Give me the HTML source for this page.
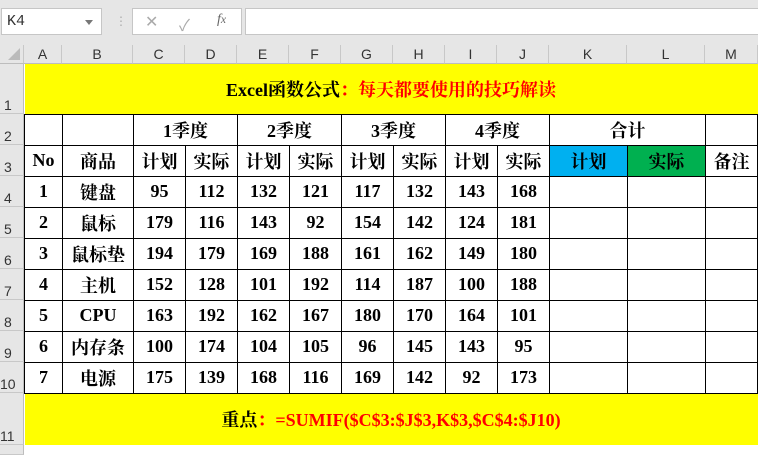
<!DOCTYPE html>
<html><head><meta charset="utf-8"><style>
*{margin:0;padding:0;box-sizing:border-box}
body{width:758px;height:450px;overflow:hidden;background:#fff;position:relative;font-family:"Liberation Sans","Noto Sans CJK SC",sans-serif}
.top{position:absolute;left:0;top:0;width:758px;height:45px;background:#e6e6e6}
.nb{position:absolute;left:1px;top:8px;width:101px;height:27px;background:#fff;border:1px solid #c6c6c6;font-family:"Liberation Mono",monospace;font-size:15px;padding:4px 5px;color:#333}
.nb:after{content:"";position:absolute;right:8px;top:11px;border:4px solid transparent;border-top:5px solid #777}
.fx{position:absolute;left:132px;top:8px;width:110px;height:27px;background:#fff;border:1px solid #c6c6c6;color:#aaa;font-size:16px}
.fb{position:absolute;left:245px;top:8px;width:513px;height:27px;background:#fff;border:1px solid #c6c6c6;border-right:none}
.ch{position:absolute;top:45px;height:19px;background:#e6e6e6;border-right:1px solid #c8c8c8;border-bottom:1px solid #bdbdbd;font-size:14px;color:#333;text-align:center;line-height:19px}
.rh{position:absolute;left:0;width:24px;background:#e6e6e6;border-bottom:1px solid #c8c8c8;border-right:1px solid #bdbdbd;font-size:14px;color:#333;padding-left:4px;display:flex;align-items:flex-end;padding-bottom:0}
table{position:absolute;left:24px;top:64px;border-collapse:collapse;table-layout:fixed;font-family:"Liberation Serif","Noto Serif CJK SC",serif;font-weight:bold;font-size:18px;color:#000}
td{border:1.5px solid #000;text-align:center;padding:0;overflow:hidden;white-space:nowrap}
tr{height:31px}
.y{background:#ff0;border-left:none;border-right:none}
.r{color:#f00}
</style></head><body>
<div class="top"></div>
<div class="nb">K4</div>
<div style="position:absolute;left:115px;top:14px;color:#aaa;font-size:12px">⋮</div>
<div class="fx"><span style="position:absolute;left:12px;top:3px">✕</span><span style="position:absolute;left:46px;top:3px">✓</span><span style="position:absolute;left:84px;top:3px;font-family:'Liberation Serif',serif;font-style:italic;color:#666;font-size:14px">f<small>x</small></span></div>
<div class="fb"></div>
<div class="ch" style="left:0;width:24px"><span style="position:absolute;right:3px;bottom:3px;border:6px solid transparent;border-right-color:#bbb;border-bottom-color:#bbb"></span></div>
<div class="ch" style="left:24px;width:38px">A</div>
<div class="ch" style="left:62px;width:71px">B</div>
<div class="ch" style="left:133px;width:52px">C</div>
<div class="ch" style="left:185px;width:52px">D</div>
<div class="ch" style="left:237px;width:52px">E</div>
<div class="ch" style="left:289px;width:52px">F</div>
<div class="ch" style="left:341px;width:52px">G</div>
<div class="ch" style="left:393px;width:52px">H</div>
<div class="ch" style="left:445px;width:52px">I</div>
<div class="ch" style="left:497px;width:52px">J</div>
<div class="ch" style="left:549px;width:78px">K</div>
<div class="ch" style="left:627px;width:78px">L</div>
<div class="ch" style="left:705px;width:53px">M</div>
<div class="rh" style="top:64px;height:50px">1</div>
<div class="rh" style="top:114px;height:31px">2</div>
<div class="rh" style="top:145px;height:31px">3</div>
<div class="rh" style="top:176px;height:31px">4</div>
<div class="rh" style="top:207px;height:31px">5</div>
<div class="rh" style="top:238px;height:31px">6</div>
<div class="rh" style="top:269px;height:31px">7</div>
<div class="rh" style="top:300px;height:31px">8</div>
<div class="rh" style="top:331px;height:31px">9</div>
<div class="rh" style="top:362px;height:31px;padding-left:0">10</div>
<div class="rh" style="top:393px;height:52px;padding-left:0">11</div>
<div class="rh" style="top:445px;height:10px"></div>
<table>
<colgroup><col style="width:38px"><col style="width:71px"><col style="width:52px"><col style="width:52px"><col style="width:52px"><col style="width:52px"><col style="width:52px"><col style="width:52px"><col style="width:52px"><col style="width:52px"><col style="width:78px"><col style="width:78px"><col style="width:52px"></colgroup>
<tr style="height:50px"><td colspan="13" class="y" style="border-top:none">Excel函数公式<span class="r">：每天都要使用的技巧解读</span></td></tr>
<tr><td></td><td></td><td colspan="2">1季度</td><td colspan="2">2季度</td><td colspan="2">3季度</td><td colspan="2">4季度</td><td colspan="2">合计</td><td></td></tr>
<tr><td>No</td><td>商品</td><td>计划</td><td>实际</td><td>计划</td><td>实际</td><td>计划</td><td>实际</td><td>计划</td><td>实际</td><td style="background:#00b0f0">计划</td><td style="background:#00b050">实际</td><td>备注</td></tr>
<tr><td>1</td><td>键盘</td><td>95</td><td>112</td><td>132</td><td>121</td><td>117</td><td>132</td><td>143</td><td>168</td><td></td><td></td><td></td></tr>
<tr><td>2</td><td>鼠标</td><td>179</td><td>116</td><td>143</td><td>92</td><td>154</td><td>142</td><td>124</td><td>181</td><td></td><td></td><td></td></tr>
<tr><td>3</td><td>鼠标垫</td><td>194</td><td>179</td><td>169</td><td>188</td><td>161</td><td>162</td><td>149</td><td>180</td><td></td><td></td><td></td></tr>
<tr><td>4</td><td>主机</td><td>152</td><td>128</td><td>101</td><td>192</td><td>114</td><td>187</td><td>100</td><td>188</td><td></td><td></td><td></td></tr>
<tr><td>5</td><td>CPU</td><td>163</td><td>192</td><td>162</td><td>167</td><td>180</td><td>170</td><td>164</td><td>101</td><td></td><td></td><td></td></tr>
<tr><td>6</td><td>内存条</td><td>100</td><td>174</td><td>104</td><td>105</td><td>96</td><td>145</td><td>143</td><td>95</td><td></td><td></td><td></td></tr>
<tr><td>7</td><td>电源</td><td>175</td><td>139</td><td>168</td><td>116</td><td>169</td><td>142</td><td>92</td><td>173</td><td></td><td></td><td></td></tr>
<tr style="height:52px"><td colspan="13" class="y" style="border-bottom:none">重点<span class="r">：=SUMIF($C$3:$J$3,K$3,$C$4:$J10)</span></td></tr>
</table>
</body></html>
